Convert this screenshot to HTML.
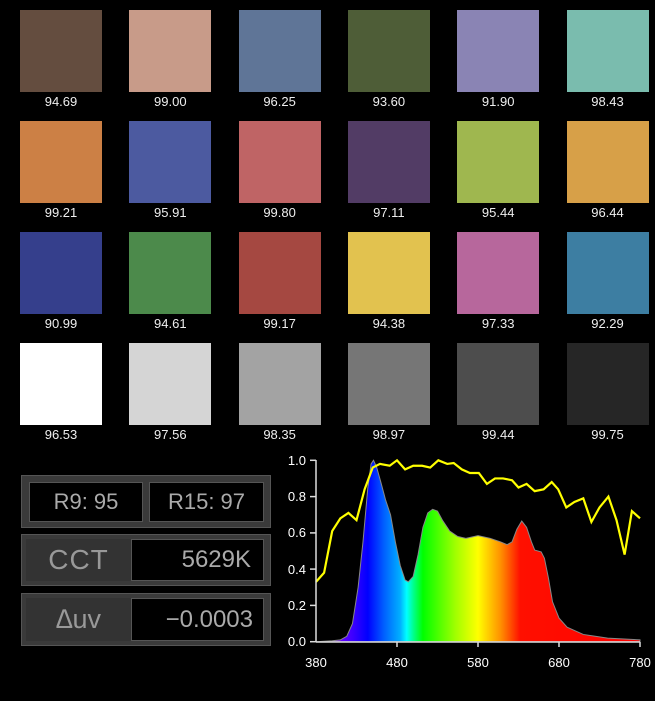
<!DOCTYPE html>
<html><head><style>
body{margin:0;background:#000;width:655px;height:701px;overflow:hidden;position:relative;font-family:"Liberation Sans",sans-serif}
.sw{position:absolute;width:82px;height:82px}
.lb{position:absolute;width:100px;text-align:center;color:#eee;font-size:13px}
.pn{position:absolute;left:21px;width:250px;background:#3a3a3a;border:1px solid #555;box-sizing:border-box}
.bx{position:absolute;background:#000;border:1px solid #555;box-sizing:border-box;color:#aaa;text-align:center}
.lab{position:absolute;color:#999;text-align:center}
</style></head><body>
<div id="g"></div>
<script>
var c=[["#644d3f","#c89b89","#5f7597","#4e5d37","#8a84b4","#7abcae"],
["#cc8045","#4c5aa0","#bf6465","#523c65","#9fb74f","#d7a048"],
["#353f8c","#4c8a4b","#a54841","#e2c24f","#b7679c","#3d7ea2"],
["#ffffff","#d5d5d5","#a3a3a3","#767676","#4d4d4d","#262626"]];
var v=[["94.69","99.00","96.25","93.60","91.90","98.43"],["99.21","95.91","99.80","97.11","95.44","96.44"],["90.99","94.61","99.17","94.38","97.33","92.29"],["96.53","97.56","98.35","98.97","99.44","99.75"]];
var h="";
for(var r=0;r<4;r++)for(var k=0;k<6;k++){var x=20+k*109.3,y=10+r*111;
h+='<div class="sw" style="left:'+x+'px;top:'+y+'px;background:'+c[r][k]+'"></div><div class="lb" style="left:'+(x-9)+'px;top:'+(y+84)+'px">'+v[r][k]+'</div>';}
document.getElementById("g").innerHTML=h;
</script>
<div class="pn" style="top:475px;height:53px">
<div class="bx" style="left:7px;top:6px;width:114px;height:40px;font-size:22px;line-height:38px">R9: 95</div>
<div class="bx" style="left:127px;top:6px;width:115px;height:40px;font-size:22px;line-height:38px">R15: 97</div>
</div>
<div class="pn" style="top:534px;height:52px">
<div class="lab" style="left:4px;top:4px;width:105px;height:42px;background:#333;font-size:28px;line-height:42px;letter-spacing:1px">CCT</div>
<div class="bx" style="left:109px;top:4px;width:133px;height:42px;font-size:24px;line-height:40px;text-align:right;padding-right:12px">5629K</div>
</div>
<div class="pn" style="top:593px;height:53px">
<div class="lab" style="left:4px;top:4px;width:105px;height:43px;background:#333;font-size:27px;line-height:43px"><i>∆</i>uv</div>
<div class="bx" style="left:109px;top:4px;width:133px;height:43px;font-size:24px;line-height:41px;text-align:right;padding-right:10px">−0.0003</div>
</div>
<svg style="position:absolute;left:0;top:0" width="655" height="701">
<defs><linearGradient id="sp" gradientUnits="userSpaceOnUse" x1="380" y1="0" x2="780" y2="0">
<stop offset="0.05" stop-color="#8000ff"/><stop offset="0.11" stop-color="#4000ff"/><stop offset="0.16" stop-color="#0000ff"/><stop offset="0.21" stop-color="#0060ff"/><stop offset="0.26" stop-color="#00b0ff"/><stop offset="0.28" stop-color="#00ffff"/><stop offset="0.3" stop-color="#00ff90"/><stop offset="0.33" stop-color="#00ff00"/><stop offset="0.43" stop-color="#a0ff00"/><stop offset="0.5" stop-color="#ffff00"/><stop offset="0.57" stop-color="#ff9000"/><stop offset="0.63" stop-color="#ff1000"/><stop offset="1" stop-color="#ff0000"/></linearGradient></defs>
<g transform="translate(316,641.7) scale(0.81,-181.4) translate(-380,0)">
<path fill="url(#sp)" stroke="#888" stroke-width="1" vector-effect="non-scaling-stroke" d="M380,0 L400,0.005 410,0.01 418,0.03 425,0.1 432,0.3 438,0.55 444,0.85 448,0.98 451,1 455,0.96 460,0.88 466,0.78 472,0.7 478,0.55 484,0.42 490,0.34 494,0.33 500,0.36 506,0.48 512,0.63 518,0.71 524,0.73 530,0.72 536,0.67 545,0.61 555,0.58 565,0.57 580,0.585 595,0.57 608,0.55 616,0.535 622,0.55 628,0.62 634,0.665 640,0.63 646,0.55 650,0.505 658,0.495 662,0.46 667,0.35 672,0.22 680,0.13 690,0.08 710,0.04 740,0.02 780,0.01 L780,0 Z"/>
<polyline fill="none" stroke="#ffff00" stroke-width="2.2" vector-effect="non-scaling-stroke" points="380,0.33 390,0.38 400,0.61 410,0.68 420,0.71 430,0.67 440,0.84 450,0.96 459,0.98 471,0.97 480,1 490,0.95 500,0.97 511,0.97 521,0.96 531,1 542,0.98 550,0.985 560,0.95 570,0.93 581,0.93 591,0.87 601,0.9 611,0.9 622,0.89 630,0.85 640,0.87 650,0.83 661,0.84 671,0.88 679,0.84 689,0.74 699,0.77 710,0.79 720,0.66 730,0.74 741,0.8 751,0.67 761,0.48 770,0.72 780,0.68"/>
</g>
<g stroke="#ddd" stroke-width="1.5">
<line x1="316" y1="460" x2="316" y2="642"/><line x1="316" y1="642" x2="640" y2="642"/>
<line x1="310" y1="460.3" x2="316" y2="460.3"/><line x1="310" y1="496.6" x2="316" y2="496.6"/><line x1="310" y1="532.9" x2="316" y2="532.9"/><line x1="310" y1="569.1" x2="316" y2="569.1"/><line x1="310" y1="605.4" x2="316" y2="605.4"/><line x1="310" y1="641.7" x2="316" y2="641.7"/>
<line x1="397" y1="642" x2="397" y2="647"/><line x1="478" y1="642" x2="478" y2="647"/><line x1="559" y1="642" x2="559" y2="647"/><line x1="640" y1="642" x2="640" y2="647"/>
</g>
<g fill="#fff" font-size="13" font-family="Liberation Sans,sans-serif" text-anchor="end">
<text x="306" y="465">1.0</text><text x="306" y="501">0.8</text><text x="306" y="537">0.6</text><text x="306" y="574">0.4</text><text x="306" y="610">0.2</text><text x="306" y="646">0.0</text>
</g>
<g fill="#fff" font-size="13" font-family="Liberation Sans,sans-serif" text-anchor="middle">
<text x="316" y="667">380</text><text x="397" y="667">480</text><text x="478" y="667">580</text><text x="559" y="667">680</text><text x="640" y="667">780</text>
</g>
</svg>
</body></html>
